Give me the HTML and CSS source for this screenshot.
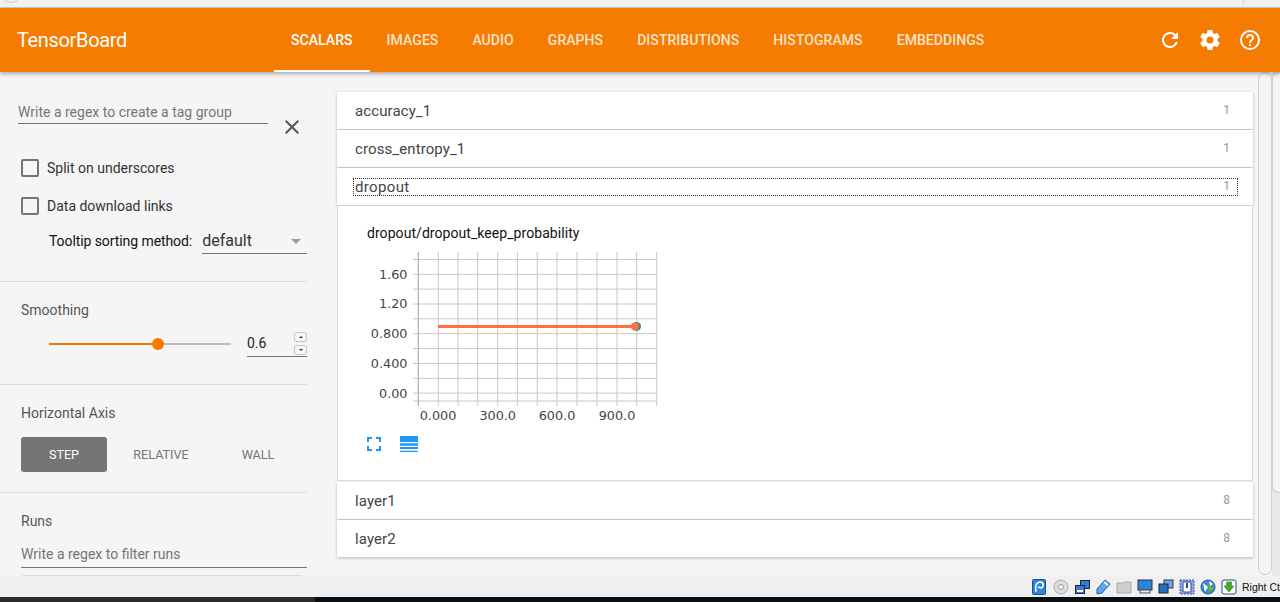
FILE: index.html
```html
<!DOCTYPE html>
<html lang="en">
<head>
    <meta charset="UTF-8">
    <meta name="viewport" content="width=device-width, initial-scale=1.0">
    <title>TensorBoard</title>
    <link rel="stylesheet" href="styles.css">
</head>
<body>
    <div class="browser-strip">
        <span class="strip-circle"></span>
        <span class="strip-tick"></span>
    </div>
    <header class="toolbar">
        <div class="brand">TensorBoard</div>
        <nav class="tabs">
            <a class="tab tab-active">SCALARS</a>
            <a class="tab">IMAGES</a>
            <a class="tab">AUDIO</a>
            <a class="tab">GRAPHS</a>
            <a class="tab">DISTRIBUTIONS</a>
            <a class="tab">HISTOGRAMS</a>
            <a class="tab">EMBEDDINGS</a>
        </nav>
        <div class="toolbar-icons">
            <svg class="tool-icon" viewBox="0 0 24 24"><path d="M17.65 6.35A7.95 7.95 0 0 0 12 4a8 8 0 1 0 7.73 10h-2.08A6 6 0 1 1 12 6c1.66 0 3.14.69 4.22 1.78L13 11h7V4l-2.35 2.35z"/></svg>
            <svg class="tool-icon" viewBox="0 0 24 24"><path d="M19.43 12.98c.04-.32.07-.64.07-.98s-.03-.66-.07-.98l2.11-1.65c.19-.15.24-.42.12-.64l-2-3.46c-.12-.22-.39-.3-.61-.22l-2.49 1c-.52-.4-1.08-.73-1.69-.98l-.38-2.65A.49.49 0 0 0 14 2h-4c-.25 0-.46.18-.49.42l-.38 2.65c-.61.25-1.17.59-1.69.98l-2.49-1c-.23-.09-.49 0-.61.22l-2 3.46c-.13.22-.07.49.12.64l2.11 1.65c-.04.32-.07.65-.07.98s.03.66.07.98l-2.11 1.65c-.19.15-.24.42-.12.64l2 3.46c.12.22.39.3.61.22l2.49-1c.52.4 1.08.73 1.69.98l.38 2.65c.03.24.24.42.49.42h4c.25 0 .46-.18.49-.42l.38-2.65c.61-.25 1.17-.59 1.69-.98l2.49 1c.23.09.49 0 .61-.22l2-3.46c.12-.22.07-.49-.12-.64l-2.11-1.65zM12 15.5a3.5 3.5 0 1 1 0-7 3.5 3.5 0 0 1 0 7z"/></svg>
            <svg class="tool-icon" viewBox="0 0 24 24"><path d="M11 18h2v-2h-2v2zm1-16a10 10 0 1 0 0 20 10 10 0 0 0 0-20zm0 18a8 8 0 1 1 0-16 8 8 0 0 1 0 16zm0-14a4 4 0 0 0-4 4h2a2 2 0 1 1 4 0c0 2-3 1.75-3 5h2c0-2.25 3-2.5 3-5a4 4 0 0 0-4-4z"/></svg>
        </div>
    </header>

    <div class="layout">
        <aside class="sidebar">
            <section class="side-section section-tags">
                <div class="regex-row">
                    <div class="text-input regex-input">Write a regex to create a tag group</div>
                    <svg class="close-icon" viewBox="0 0 24 24"><path d="M19 6.41 17.59 5 12 10.59 6.41 5 5 6.41 10.59 12 5 17.59 6.41 19 12 13.41 17.59 19 19 17.59 13.41 12z"/></svg>
                </div>
                <label class="check-row"><span class="checkbox"></span>Split on underscores</label>
                <label class="check-row"><span class="checkbox"></span>Data download links</label>
                <div class="sort-row">
                    <span class="sort-label">Tooltip sorting method:</span>
                    <div class="select">default<span class="select-arrow"></span></div>
                </div>
            </section>

            <section class="side-section section-smoothing">
                <div class="side-title">Smoothing</div>
                <div class="slider-row">
                    <div class="slider">
                        <div class="slider-fill"></div>
                        <div class="slider-knob"></div>
                    </div>
                    <div class="number-input">0.6
                        <div class="spinner">
                            <span class="spin spin-up"></span>
                            <span class="spin spin-down"></span>
                        </div>
                    </div>
                </div>
            </section>

            <section class="side-section section-axis">
                <div class="side-title">Horizontal Axis</div>
                <div class="axis-buttons">
                    <div class="axis-btn axis-btn-active">STEP</div>
                    <div class="axis-btn">RELATIVE</div>
                    <div class="axis-btn">WALL</div>
                </div>
            </section>

            <section class="section-runs">
                <div class="side-title">Runs</div>
                <div class="text-input runs-input">Write a regex to filter runs</div>
                <div class="runs-rule"></div>
            </section>
        </aside>

        <main class="content">
            <div class="category"><span>accuracy_1</span><span class="count">1</span></div>
            <div class="category"><span>cross_entropy_1</span><span class="count">1</span></div>
            <div class="category category-open"><div class="focus-box"><span>dropout</span><span class="count">1</span></div></div>
            <div class="panel">
                <div class="chart-title">dropout/dropout_keep_probability</div>
                <!-- viewBox uses page coordinates -->
                <svg class="chart" width="325" height="175" viewBox="337 250 325 175">
                    <path class="grid" d="M418.3 252V406M438.3 252V406M458 252V406M477.7 252V406M497.7 252V406M517.400 252V406M537.200 252V406M557 252V406M577 252V406M597 252V406M617 252V406M636.700 252V406M656.700 252V406"/>
                    <path class="grid" d="M413 259.500H657M413 274.300H657M413 289.100H657M413 304H657M413 318.800H657M413 333.700H657M413 348.600H657M413 363.400H657M413 378.300H657M413 393.100H657M413 401H657"/>
                    <path class="axis-line" d="M418.300 252V406"/>
                    <circle class="dot-under" cx="636.500" cy="326.400" r="4.500"/>
                    <path class="line-main" d="M438 326.400H635"/>
                    <circle class="dot-over" cx="635" cy="326.400" r="4"/>
                    <g class="y-labels">
                        <text x="407.500" y="278.500">1.60</text>
                        <text x="407.500" y="308">1.20</text>
                        <text x="407.500" y="338">0.800</text>
                        <text x="407.500" y="367.500">0.400</text>
                        <text x="407.500" y="397.500">0.00</text>
                    </g>
                    <g class="x-labels">
                        <text x="438" y="420">0.000</text>
                        <text x="497.700" y="420">300.0</text>
                        <text x="557" y="420">600.0</text>
                        <text x="617" y="420">900.0</text>
                    </g>
                </svg>
                <div class="chart-actions">
                    <svg class="icon-expand" viewBox="0 0 14 14"><path d="M0 0h5v2H2v3H0zM9 0h5v5h-2V2H9zM0 9h2v3h3v2H0zM12 9h2v5H9v-2h3z"/></svg>
                    <svg class="icon-list" viewBox="0 0 18 16"><path d="M0 0h18v6H0zM0 7.300h18v2.400H0zM0 11h18v2H0zM0 14.700h18V16H0z"/></svg>
                </div>
            </div>
            <div class="category"><span>layer1</span><span class="count">8</span></div>
            <div class="category"><span>layer2</span><span class="count">8</span></div>
        </main>

        <div class="scrollbars">
            <div class="scroll-thumb"></div>
            <div class="scroll-outer"><div class="scroll-outer-thumb"></div></div>
        </div>
    </div>

    <footer class="statusbar">
        <div class="vm-icons">
            <svg class="vm-icon" viewBox="0 0 16 16"><rect x=".5" y=".5" width="13" height="15" rx="1" fill="#2f86d6" stroke="#1a4f8f"/><path d="M4 13C3 8 4 3 8 3s4 5 1 6L6 8" fill="none" stroke="#fff" stroke-width="1.500"/></svg>
            <svg class="vm-icon" viewBox="0 0 16 16"><circle cx="8" cy="8" r="7" fill="#ddd" stroke="#aaa"/><circle cx="8" cy="8" r="2.500" fill="#f4f4f4" stroke="#999"/></svg>
            <svg class="vm-icon" viewBox="0 0 16 16"><rect x="6.500" y="1.500" width="9" height="8" fill="#2f7fd6" stroke="#223"/><rect x="1.500" y="6.500" width="9" height="8" fill="#2f7fd6" stroke="#223"/><rect x="3" y="11" width="6" height="2" fill="#fff"/></svg>
            <svg class="vm-icon" viewBox="0 0 16 16"><path d="M10 1l5 4-8 9-5 1 0-5z" fill="#5aa6ea" stroke="#1a5fae"/><path d="M9 3l4 3" stroke="#fff" stroke-width="2"/></svg>
            <svg class="vm-icon" viewBox="0 0 16 16"><path d="M1 4h6l1-1h7v11H1z" fill="#cfcfcf" stroke="#aaa"/></svg>
            <svg class="vm-icon" viewBox="0 0 16 16"><rect x="1" y="1" width="14" height="10" fill="#2a85e0" stroke="#333"/><rect x="3" y="11" width="10" height="3" fill="#eee" stroke="#555"/></svg>
            <svg class="vm-icon" viewBox="0 0 16 16"><rect x="6" y="1" width="9" height="8" fill="#6ba6e6" stroke="#335"/><rect x="1" y="5" width="9" height="9" fill="#1f6fc4" stroke="#223"/></svg>
            <svg class="vm-icon" viewBox="0 0 16 16"><rect x="1" y="1" width="14" height="14" fill="#8fa8e0" stroke="#3c5bb0" stroke-dasharray="2 1"/><rect x="4" y="3" width="8" height="10" rx="1" fill="#fff" stroke="#2a4a9a"/><path d="M8 4v5" stroke="#2a4a9a" stroke-width="2"/></svg>
            <svg class="vm-icon" viewBox="0 0 16 16"><circle cx="8" cy="8" r="7" fill="#3a8ad8" stroke="#1c5a9c"/><path d="M3 4l5 4-3 5zM9 2l4 3-3 2z" fill="#fff"/><path d="M8 6l6 3-5 5z" fill="#67b52e"/></svg>
            <svg class="vm-icon" viewBox="0 0 16 16"><rect x="1" y="1" width="14" height="14" rx="2" fill="#fff" stroke="#1d4f96"/><path d="M5.500 3h5v4h2.500L8 13 3 7h2.500z" fill="#3fae1f" stroke="#1d6a10" stroke-width=".5"/></svg>
        </div>
        <div class="host-key">Right Ctrl</div>
    </footer>
    <div class="black-bar"></div>
</body>
</html>
```

FILE: styles.css
```css
html, body {
    margin: 0;
    padding: 0;
    height: 100%;
    overflow: hidden;
}
body {
    font-family: Roboto, "Noto Sans", sans-serif;
    font-size: 14px;
    background-color: #f5f5f5;
    display: flex;
    flex-direction: column;
    height: 602px;
}
svg {
    display: block;
}

.browser-strip {
    height: 7px;
    flex: none;
    background-color: #f2f1f0;
    border-bottom: 1px solid #c9c9c9;
    position: relative;
    overflow: hidden;
}
.strip-circle {
    position: absolute;
    left: 0;
    top: -19px;
    width: 20px;
    height: 20px;
    border: 1px solid #c9c9c9;
    border-radius: 50%;
}
.strip-tick {
    position: absolute;
    left: 1243px;
    top: 0;
    width: 1px;
    height: 4px;
    background-color: #d5d5d5;
}

.toolbar {
    height: 64px;
    flex: none;
    display: flex;
    align-items: center;
    background-color: #f57c00;
    color: white;
    position: relative;
    z-index: 2;
    box-shadow: 0 2px 4px rgba(0, 0, 0, 0.3);
}
.brand {
    width: 274px;
    flex: none;
    box-sizing: border-box;
    padding-left: 17px;
    font-size: 20px;
    font-weight: 400;
    letter-spacing: -0.35px;
}
.tabs {
    display: flex;
    height: 100%;
}
.tab {
    display: flex;
    align-items: center;
    justify-content: center;
    box-sizing: border-box;
    height: 100%;
    padding: 0 17px;
    font-size: 14px;
    font-weight: 500;
    letter-spacing: 0.06px;
    color: rgba(255, 255, 255, 0.8);
}
.tab-active {
    color: white;
    padding-top: 2px;
    border-bottom: 2px solid white;
}
.toolbar-icons {
    margin-left: auto;
    display: flex;
    gap: 16px;
    padding-right: 18px;
}
.tool-icon {
    width: 24px;
    height: 24px;
    fill: white;
}

.layout {
    flex: 1;
    min-height: 0;
    display: flex;
}

.sidebar {
    width: 307px;
    flex: none;
    overflow: hidden;
}
.side-section {
    border-bottom: 1px solid #dcdcdc;
    box-sizing: border-box;
}
.section-tags {
    height: 210px;
    padding: 26px 0 0 18px;
}
.section-smoothing {
    height: 103px;
    padding: 18px 0 0 21px;
}
.section-axis {
    height: 108px;
    padding: 18px 0 0 21px;
}
.section-runs {
    padding: 18px 0 0 21px;
}
.side-title {
    font-size: 14px;
    line-height: 20px;
    color: #555;
}

.text-input {
    color: #757575;
    font-size: 14px;
    line-height: 20px;
    border-bottom: 1px solid #737373;
}
.regex-row {
    display: flex;
    align-items: flex-start;
}
.regex-input {
    width: 250px;
    padding-bottom: 1px;
    margin-top: 4px;
}
.close-icon {
    width: 24px;
    height: 24px;
    fill: #555;
    margin: 17px 0 0 12px;
}
.check-row {
    display: flex;
    align-items: center;
    gap: 8px;
    margin-left: 3px;
    color: #333;
    font-size: 14px;
    height: 20px;
}
.check-row + .check-row {
    margin-top: 18px;
}
.regex-row + .check-row {
    margin-top: 19px;
}
.checkbox {
    width: 14px;
    height: 14px;
    border: 2px solid #757575;
    border-radius: 2px;
}
.sort-row {
    display: flex;
    align-items: flex-end;
    margin: 13px 0 0 31px;
}
.sort-label {
    color: #111;
    font-size: 14px;
    line-height: 22px;
    letter-spacing: -0.08px;
    white-space: nowrap;
    margin-bottom: 2px;
}
.select {
    width: 105px;
    flex: none;
    box-sizing: border-box;
    margin-left: 10px;
    padding: 1px 0;
    color: #333;
    font-size: 16px;
    line-height: 22px;
    border-bottom: 1px solid #737373;
    position: relative;
}
.select-arrow {
    position: absolute;
    right: 6px;
    top: 10px;
    border-left: 5px solid transparent;
    border-right: 5px solid transparent;
    border-top: 5px solid #999;
}

.slider-row {
    display: flex;
    margin-top: 12px;
    padding-left: 28px;
}
.slider {
    width: 182px;
    height: 2px;
    margin-top: 11px;
    background-color: #bdbdbd;
    position: relative;
}
.slider-fill {
    width: 109px;
    height: 2px;
    background-color: #f57c00;
}
.slider-knob {
    position: absolute;
    left: 103px;
    top: -5px;
    width: 12px;
    height: 12px;
    border-radius: 50%;
    background-color: #f57c00;
}
.number-input {
    width: 60px;
    box-sizing: border-box;
    margin-left: 16px;
    height: 25px;
    line-height: 22px;
    font-size: 14px;
    color: #222;
    border-bottom: 1px solid #737373;
    position: relative;
}
.spinner {
    position: absolute;
    right: 0;
    top: 0;
    display: flex;
    flex-direction: column;
    gap: 3px;
}
.spin {
    width: 13px;
    height: 10px;
    box-sizing: border-box;
    border: 1px solid #c4c4c4;
    border-radius: 3px;
    background-color: #f7f7f7;
    position: relative;
}
.spin::after {
    content: "";
    position: absolute;
    left: 4px;
    top: 3px;
    border-left: 2px solid transparent;
    border-right: 2px solid transparent;
}
.spin-up::after {
    border-bottom: 2px solid #333;
}
.spin-down::after {
    border-top: 2px solid #333;
}

.axis-buttons {
    display: flex;
    gap: 11px;
    margin-top: 14px;
}
.axis-btn {
    width: 86px;
    height: 35px;
    flex: none;
    display: flex;
    align-items: center;
    justify-content: center;
    border-radius: 3px;
    font-size: 12.6px;
    color: #757575;
}
.axis-btn-active {
    background-color: #757575;
    color: white;
}

.runs-input {
    margin-top: 13px;
    padding-bottom: 3px;
}
.runs-rule {
    height: 1px;
    margin: 7px 5px 0 1px;
    background-color: #dcdcdc;
}

.content {
    width: 916px;
    flex: none;
    margin: 20px 0 0 30px;
}
.category {
    height: 37px;
    box-sizing: border-box;
    margin-bottom: 1px;
    padding: 0 23px 0 18px;
    display: flex;
    align-items: center;
    justify-content: space-between;
    background-color: white;
    color: #444;
    font-size: 15px;
    letter-spacing: 0.1px;
    box-shadow: 0 1px 3px rgba(0, 0, 0, 0.25);
}
.category-open {
    padding: 0 15px 0 16px;
}
.focus-box {
    flex: 1;
    height: 16px;
    padding: 0 7px 0 1px;
    display: flex;
    align-items: center;
    justify-content: space-between;
    border: 1px dotted #333;
    letter-spacing: 0.35px;
}
.count {
    color: #999;
    font-size: 12px;
    letter-spacing: 0;
    padding-bottom: 2px;
}
.panel {
    height: 275px;
    box-sizing: border-box;
    margin: 1px 0;
    padding: 19px 0 0 29px;
    background-color: white;
    border: 1px solid #dedede;
    border-top: none;
}
.chart-title {
    font-size: 14px;
    line-height: 17px;
    letter-spacing: 0.06px;
    color: #111;
}
.chart {
    margin: 8px 0 0 -30px;
    overflow: visible;
}
.grid {
    stroke: #c8c8c8;
    stroke-width: 1;
    fill: none;
}
.axis-line {
    stroke: #aaa;
    fill: none;
}
.line-main {
    stroke: #ff7043;
    stroke-width: 3;
    fill: none;
}
.dot-under {
    fill: #0097a7;
}
.dot-over {
    fill: #ff7043;
}
.y-labels text,
.x-labels text {
    font-family: "DejaVu Sans", sans-serif;
    font-size: 12.8px;
    fill: #444;
}
.y-labels text {
    text-anchor: end;
}
.x-labels text {
    text-anchor: middle;
}
.chart-actions {
    display: flex;
    align-items: center;
    gap: 19px;
    margin-top: 11px;
}
.icon-expand {
    width: 14px;
    height: 14px;
    fill: #2196f3;
}
.icon-list {
    width: 18px;
    height: 16px;
    fill: #2196f3;
}

.scrollbars {
    flex: 1;
    display: flex;
    padding-left: 5px;
}
.scroll-thumb {
    width: 14px;
    flex: none;
    box-sizing: border-box;
    margin-bottom: 1px;
    background-color: #f6f5f4;
    border: 1px solid #cfcdca;
    border-radius: 7px;
}
.scroll-outer {
    flex: 1;
    background-color: #e9e9e8;
}
.scroll-outer-thumb {
    height: 421px;
    box-sizing: border-box;
    background-color: #f6f5f4;
    border: 1px solid #cfcdca;
    border-right: none;
    border-radius: 7px 0 0 7px;
}

.statusbar {
    height: 21px;
    flex: none;
    display: flex;
    justify-content: flex-end;
    align-items: center;
    background-color: #f0f0f0;
}
.vm-icons {
    display: flex;
    gap: 5px;
}
.vm-icon {
    width: 16px;
    height: 16px;
}
.host-key {
    width: 38px;
    margin-left: 5px;
    overflow: hidden;
    white-space: nowrap;
    font-family: "Liberation Sans", sans-serif;
    font-size: 10.5px;
    color: #111;
}
.black-bar {
    height: 5px;
    flex: none;
    background: linear-gradient(to right, #2b2b2b 315px, #0b0f12 315px);
}
```
